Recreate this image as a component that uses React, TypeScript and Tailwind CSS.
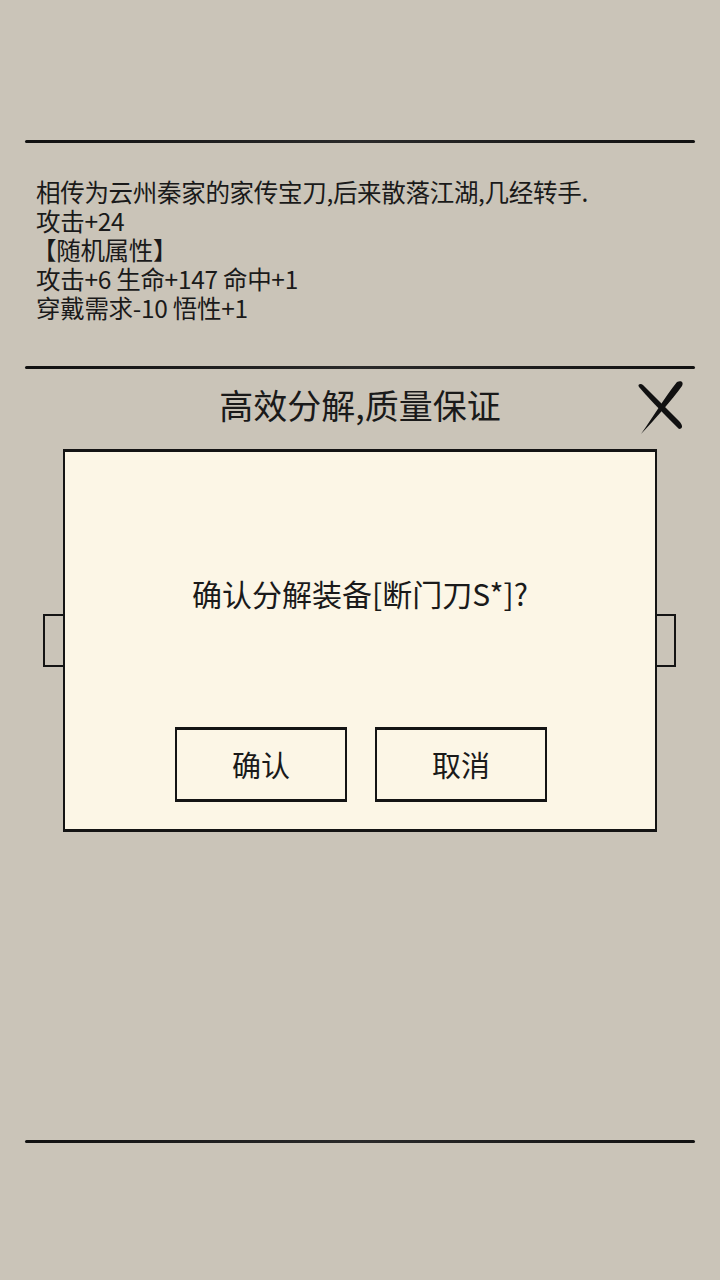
import React from "react";

function BrushLine() {
  return (
    <div className="mx-[25px] h-[4px] flex items-center">
      <div className="h-[3px] w-full rounded-full bg-gradient-to-r from-[#111] via-[#2a2a2a] to-[#111]" />
    </div>
  );
}

function CloseX() {
  return (
    <svg width="56" height="56" viewBox="0 0 56 56" className="block">
      <path d="M6 8 C 4 5, 8 4, 10 6 C 22 18, 34 30, 46 42 C 50 46, 50 50, 46 50 C 34 38, 20 24, 6 8 Z" fill="#111" />
      <path d="M44 3 C 48 1, 51 3, 49 7 C 38 22, 24 38, 8 55 C 20 38, 32 18, 44 3 Z" fill="#111" />
    </svg>
  );
}

export default function App() {
  const font = { fontFamily: '"Noto Sans CJK SC", "Noto Sans", sans-serif' };
  return (
    <div
      className="w-[720px] h-[1280px] bg-[#cac4b8] text-[#1a1a1a] flex flex-col overflow-hidden"
      style={font}
    >
      <div className="h-[139px]" />
      <BrushLine />
      <div className="pl-[36px] pt-[34px] text-[24.5px] leading-[29px] h-[222px] tracking-[-0.3px]">
        <div>相传为云州秦家的家传宝刀,后来散落江湖,几经转手.</div>
        <div>攻击+24</div>
        <div className="-ml-[4px]">【随机属性】</div>
        <div>攻击+6 生命+147 命中+1</div>
        <div>穿戴需求-10 悟性+1</div>
      </div>
      <BrushLine />
      <div className="relative h-[80px] flex items-center justify-center pb-[8px]">
        <div className="text-[34px] leading-[40px]">高效分解,质量保证</div>
        <div className="absolute right-[31px] top-[10px]">
          <CloseX />
        </div>
      </div>
      <div className="relative mx-[63px] h-[383px] bg-[#fcf6e6] border-x-2 border-t-[3px] border-b-[3px] border-[#141414]">
        <div className="absolute left-[-22px] top-[162px] w-[20px] h-[53px] border-y-2 border-l-2 border-[#141414] bg-[#cac4b8]" />
        <div className="absolute right-[-21px] top-[162px] w-[19px] h-[53px] border-y-2 border-r-2 border-[#141414] bg-[#cac4b8]" />
        <div className="flex flex-col items-center pt-[121px]">
          <div className="text-[30px] leading-[40px]">确认分解装备[断门刀S*]?</div>
          <div className="mt-[114px] flex gap-[28px] pl-[2px]">
            <div className="w-[172px] h-[75px] border-2 border-t-[3px] border-b-[3px] border-[#141414] flex items-center justify-center text-[29px]">
              确认
            </div>
            <div className="w-[172px] h-[75px] border-2 border-t-[3px] border-b-[3px] border-[#141414] flex items-center justify-center text-[29px]">
              取消
            </div>
          </div>
        </div>
      </div>
      <div className="h-[307px]" />
      <BrushLine />
    </div>
  );
}
